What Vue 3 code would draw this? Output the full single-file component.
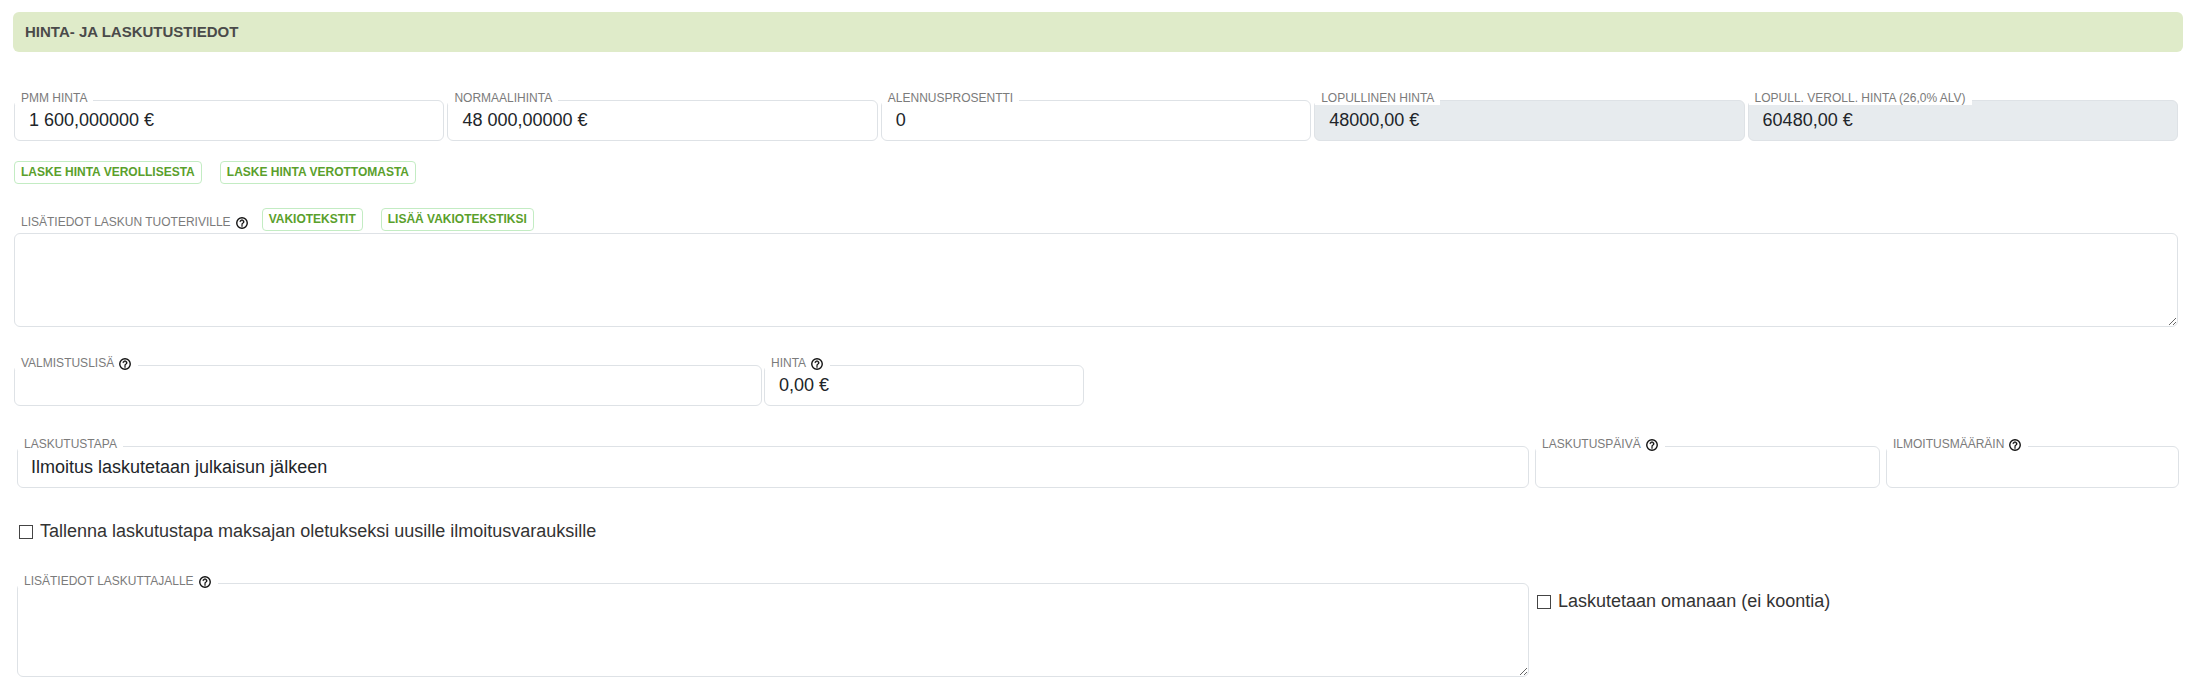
<script setup>
import { h, reactive } from 'vue'

const form = reactive({
  prices: [
    { id: 'pmm', label: 'PMM HINTA', value: '1 600,000000 €' },
    { id: 'normal', label: 'NORMAALIHINTA', value: '48 000,00000 €' },
    { id: 'discount', label: 'ALENNUSPROSENTTI', value: '0' },
    { id: 'final', label: 'LOPULLINEN HINTA', value: '48000,00 €', disabled: true },
    { id: 'final-vat', label: 'LOPULL. VEROLL. HINTA (26,0% ALV)', value: '60480,00 €', disabled: true },
  ],
  rowInfo: '',
  surcharge: '',
  surchargePrice: '0,00 €',
  billingMethod: 'Ilmoitus laskutetaan julkaisun jälkeen',
  billingDate: '',
  quantity: '',
  saveDefault: false,
  billerInfo: '',
  separate: false,
})

const HelpIcon = () =>
  h('svg', { viewBox: '0 0 24 24', width: 14, height: 14, 'aria-hidden': 'true' }, [
    h('circle', { cx: 12, cy: 12, r: 9, fill: 'none', stroke: 'currentColor', 'stroke-width': 2.4 }),
    h('path', {
      fill: 'currentColor',
      stroke: 'currentColor',
      'stroke-width': 0.4,
      d: 'M11 18h2v-2h-2v2zM12 6c-2.210 0-4 1.790-4 4h2c0-1.100.9-2 2-2s2 .9 2 2c0 2-3 1.750-3 5h2c0-2.250 3-2.500 3-5 0-2.210-1.790-4-4-4z',
    }),
  ])
</script>

<template>
  <main class="page">
    <h2 class="heading">HINTA- JA LASKUTUSTIEDOT</h2>

    <div class="row prices">
      <div v-for="p in form.prices" :key="p.id" class="field">
        <label class="tag" :for="p.id">{{ p.label }}</label>
        <input :id="p.id" v-model="p.value" class="control" type="text" :disabled="p.disabled" />
      </div>
    </div>

    <div class="actions">
      <button type="button" class="btn">LASKE HINTA VEROLLISESTA</button>
      <button type="button" class="btn">LASKE HINTA VEROTTOMASTA</button>
    </div>

    <div class="actions info-actions">
      <label class="caption" for="row-info">LISÄTIEDOT LASKUN TUOTERIVILLE <HelpIcon class="help" /></label>
      <button type="button" class="btn">VAKIOTEKSTIT</button>
      <button type="button" class="btn">LISÄÄ VAKIOTEKSTIKSI</button>
    </div>
    <textarea id="row-info" v-model="form.rowInfo" class="control area"></textarea>

    <div class="row surcharge">
      <div class="field">
        <label class="tag" for="surcharge">VALMISTUSLISÄ <HelpIcon class="help" /></label>
        <input id="surcharge" v-model="form.surcharge" class="control" type="text" />
      </div>
      <div class="field">
        <label class="tag" for="surcharge-price">HINTA <HelpIcon class="help" /></label>
        <input id="surcharge-price" v-model="form.surchargePrice" class="control" type="text" />
      </div>
    </div>

    <section class="billing">
      <div class="row method">
        <div class="field">
          <label class="tag" for="method">LASKUTUSTAPA</label>
          <input id="method" v-model="form.billingMethod" class="control tall" type="text" />
        </div>
        <div class="field">
          <label class="tag" for="date">LASKUTUSPÄIVÄ <HelpIcon class="help" /></label>
          <input id="date" v-model="form.billingDate" class="control tall" type="text" />
        </div>
        <div class="field">
          <label class="tag" for="quantity">ILMOITUSMÄÄRÄIN <HelpIcon class="help" /></label>
          <input id="quantity" v-model="form.quantity" class="control tall" type="text" />
        </div>
      </div>

      <label class="check">
        <input v-model="form.saveDefault" type="checkbox" />
        Tallenna laskutustapa maksajan oletukseksi uusille ilmoitusvarauksille
      </label>

      <div class="row biller">
        <div class="field">
          <label class="tag" for="biller-info">LISÄTIEDOT LASKUTTAJALLE <HelpIcon class="help" /></label>
          <textarea id="biller-info" v-model="form.billerInfo" class="control area"></textarea>
        </div>
        <label class="check">
          <input v-model="form.separate" type="checkbox" />
          Laskutetaan omanaan (ei koontia)
        </label>
      </div>
    </section>
  </main>
</template>

<style>
body {
  margin: 0;
  background: #fff;
}
</style>

<style scoped>
.page {
  box-sizing: border-box;
  padding: 12px 19px 8px 14px;
  font-family: "Liberation Sans", Arial, sans-serif;
  font-size: 18px;
  color: #212529;
}

.heading {
  margin: 0 -5px 48px -1px;
  padding: 0 12px;
  border-radius: 6px;
  background: #dfebc9;
  color: #4a4a4a;
  font-size: 15px;
  line-height: 40px;
  font-weight: 700;
}

.row {
  display: grid;
}

.prices {
  grid-template-columns: repeat(5, 1fr);
  gap: 3px;
}

.field {
  position: relative;
  min-width: 0;
}

.tag {
  position: absolute;
  top: -9px;
  left: 1px;
  display: flex;
  align-items: center;
  gap: 4px;
  height: 14px;
  padding: 0 6px;
  background: #fff;
  color: #7b7b7b;
  font-size: 12px;
  line-height: 14px;
  white-space: nowrap;
}

.help {
  flex: none;
  margin-top: 2px;
  color: #111;
}

.control {
  display: block;
  box-sizing: border-box;
  width: 100%;
  height: 41px;
  margin: 0;
  padding: 0 14px;
  border: 1px solid #dee2e6;
  border-radius: 6px;
  outline: none;
  background: #fff;
  color: #212529;
  font: inherit;
}

.control:disabled {
  background: #e7ebee;
  opacity: 1;
}

.tall {
  height: 42px;
  padding: 0 13px;
}

.area {
  height: 94px;
  padding: 8px 14px;
  resize: vertical;
}

.actions {
  display: flex;
  gap: 18px;
  margin-top: 20px;
}

.info-actions {
  margin: 24px 0 2px;
}

.btn {
  box-sizing: border-box;
  height: 23px;
  margin: 0;
  padding: 0 6px 1px;
  border: 1px solid #c3ecc3;
  border-radius: 4px;
  background: #fff;
  color: #5aa02c;
  font: 700 12px/20px "Liberation Sans", Arial, sans-serif;
}

.caption {
  display: flex;
  align-items: center;
  gap: 4px;
  margin-right: -5px;
  padding: 5px 0 0 7px;
  color: #7b7b7b;
  font-size: 12px;
  line-height: 15px;
}

.surcharge {
  grid-template-columns: 748fr 320fr 1092fr;
  gap: 2px;
  margin-top: 38px;
}

.billing {
  margin: 40px -1px 0 3px;
}

.method {
  grid-template-columns: 1512fr 345fr 293fr;
  gap: 6px;
}

.check {
  display: flex;
  align-items: center;
  gap: 7px;
  padding-left: 2px;
  line-height: 22px;
  color: #333;
}

.check input {
  appearance: none;
  box-sizing: border-box;
  flex: none;
  width: 14px;
  height: 14px;
  margin: 2px 0 0;
  border: 1px solid #444;
  background: #fff;
}

.check input:checked {
  background: #5aa02c;
}

.method + .check {
  margin: 32px 0 41px;
}

.biller {
  grid-template-columns: 1512fr 644fr;
  gap: 6px;
  align-items: start;
}

.biller .check {
  margin-top: 7px;
}
</style>
